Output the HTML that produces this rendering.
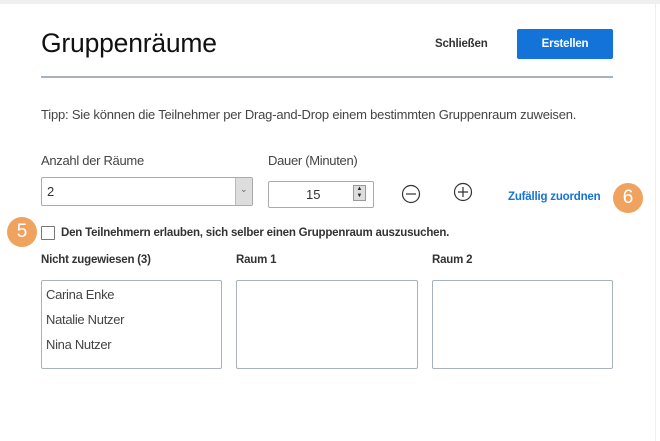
<!DOCTYPE html>
<html><head><meta charset="utf-8"><style>
*{margin:0;padding:0;box-sizing:border-box}
body{width:660px;height:441px;background:#fff;position:relative;overflow:hidden;font-family:"Liberation Sans",sans-serif;color:#333}
.a{position:absolute;white-space:nowrap}
.n{letter-spacing:-0.3px}
.box{position:absolute;border:1px solid #a8b2bd;border-radius:2px;background:#fff}
.b{font-weight:bold;font-size:11.5px;letter-spacing:-0.2px;color:#333}
.badge{position:absolute;width:30px;height:30px;border-radius:50%;background:#f0a35e;color:#fff;font-size:19px;text-align:center;line-height:30px}
</style></head><body>
<div class="a" style="left:0;top:0;width:660px;height:4px;background:#f0f0f0"></div>
<div class="a" style="left:655px;top:4px;width:1px;height:437px;background:#eee"></div>
<div class="a" style="left:41px;top:28px;font-size:26.5px;color:#111;letter-spacing:-0.2px">Gruppenräume</div>
<div class="a b" style="left:435px;top:38px">Schließen</div>
<div class="a" style="left:517px;top:29px;width:96px;height:30px;background:#1473d9;border-radius:2px;color:#fff;font-weight:bold;font-size:11.5px;text-align:center;line-height:30px;letter-spacing:-0.2px">Erstellen</div>
<div class="a" style="left:41px;top:76px;width:572px;height:2px;background:#a8b2bd"></div>
<div class="a" style="left:41px;top:107px;font-size:13px;color:#444;letter-spacing:-0.2px">Tipp: Sie können die Teilnehmer per Drag-and-Drop einem bestimmten Gruppenraum zuweisen.</div>
<div class="a n" style="left:41px;top:153px;font-size:13px;color:#444">Anzahl der Räume</div>
<div class="a n" style="left:268px;top:153px;font-size:13px;color:#444">Dauer (Minuten)</div>
<div class="box" style="left:41px;top:177px;width:212px;height:29px;border-color:#aaa"></div>
<div class="a" style="left:47px;top:184px;font-size:13px;color:#333">2</div>
<div class="a" style="left:235px;top:178px;width:17px;height:27px;background:#ddd;border-left:1px solid #bbb"></div>
<div class="a" style="left:240px;top:184px;font-size:9px;color:#666">&#8964;</div>
<div class="box" style="left:268px;top:181px;width:106px;height:27px;border-color:#aaa"></div>
<div class="a" style="left:306px;top:187px;font-size:13px;color:#333">15</div>
<div class="a" style="left:353px;top:185px;width:13px;height:16px;background:#ddd;border:1px solid #999;font-size:6px;line-height:7px;text-align:center;color:#222">▲<br>▼</div>
<svg class="a" style="left:400px;top:183px" width="22" height="22"><circle cx="11" cy="11" r="8.5" fill="none" stroke="#333" stroke-width="1.2"/><path d="M6 11h10" stroke="#333" stroke-width="1.2"/></svg>
<svg class="a" style="left:452px;top:181px" width="22" height="22"><circle cx="11" cy="11" r="8.5" fill="none" stroke="#333" stroke-width="1.2"/><path d="M6 11h10M11 6v10" stroke="#333" stroke-width="1.2"/></svg>
<div class="a b" style="left:508px;top:191px;color:#1473d9">Zufällig zuordnen</div>
<div class="badge" style="left:613px;top:183px">6</div>
<div class="badge" style="left:7px;top:217px">5</div>
<div class="a" style="left:41px;top:226px;width:14px;height:14px;border:1px solid #777;border-radius:1px"></div>
<div class="a b" style="left:61px;top:227px">Den Teilnehmern erlauben, sich selber einen Gruppenraum auszusuchen.</div>
<div class="a b" style="left:41px;top:254px">Nicht zugewiesen (3)</div>
<div class="a b" style="left:236px;top:254px">Raum 1</div>
<div class="a b" style="left:432px;top:254px">Raum 2</div>
<div class="box" style="left:41px;top:280px;width:181px;height:89px"></div>
<div class="box" style="left:236px;top:280px;width:182px;height:89px"></div>
<div class="box" style="left:432px;top:280px;width:181px;height:89px"></div>
<div class="a n" style="left:46px;top:287px;font-size:13px;color:#444">Carina Enke</div>
<div class="a n" style="left:46px;top:312px;font-size:13px;color:#444">Natalie Nutzer</div>
<div class="a n" style="left:46px;top:337px;font-size:13px;color:#444">Nina Nutzer</div>
</body></html>
